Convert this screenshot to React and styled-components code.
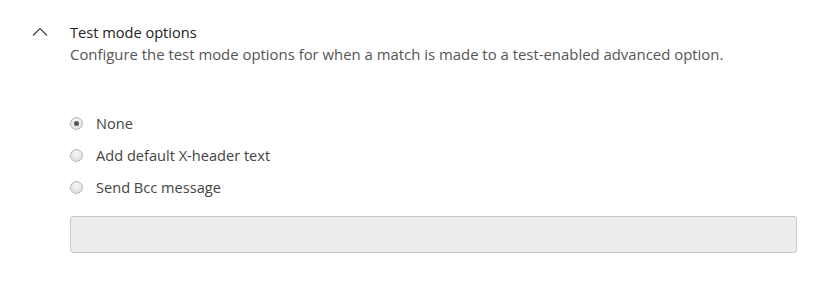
import React, { useState } from 'react';
import styled, { createGlobalStyle } from 'styled-components';

const GlobalStyle = createGlobalStyle`
  body {
    margin: 0;
    background: #fff;
    font-family: "Open Sans", "Noto Sans", sans-serif;
  }
`;

const Page = styled.div`
  padding: 21px 18px 0 31px;
`;

const Header = styled.div`
  display: flex;
  align-items: flex-start;
`;

const ToggleButton = styled.button`
  width: 39px;
  height: 22px;
  padding: 0 0 0 1px;
  margin: 0;
  border: none;
  background: none;
  display: flex;
  align-items: center;
  cursor: pointer;
`;

const HeaderText = styled.div`
  display: flex;
  flex-direction: column;
`;

const Title = styled.div`
  font-size: 14.6px;
  line-height: 22px;
  color: #222;
`;

const Description = styled.div`
  font-size: 14.9px;
  line-height: 22px;
  color: #555;
`;

const Body = styled.div`
  padding: 47px 0 0 39px;
`;

const OptionList = styled.div`
  display: flex;
  flex-direction: column;
  gap: 10px;
`;

const OptionRow = styled.label`
  display: flex;
  align-items: center;
  gap: 13px;
  height: 22px;
  font-size: 14.6px;
  color: #444;
  cursor: pointer;
`;

const Radio = styled.span`
  width: 11px;
  height: 11px;
  border-radius: 50%;
  border: 1px solid #b5b5b5;
  background: radial-gradient(circle at 50% 35%, #f4f4f4 0%, #dcdcdc 100%);
  display: flex;
  align-items: center;
  justify-content: center;
  flex-shrink: 0;

  &::after {
    content: '';
    width: 5px;
    height: 5px;
    border-radius: 50%;
    background: ${(p) => (p.$checked ? '#555' : 'transparent')};
  }
`;

const TextBox = styled.div`
  margin-top: 18px;
  height: 35px;
  border: 1px solid #cacaca;
  border-radius: 3px;
  background: #ededed;
`;

const options = ['None', 'Add default X-header text', 'Send Bcc message'];

export default function App() {
  const [selected, setSelected] = useState(0);
  return (
    <>
      <GlobalStyle />
      <Page>
        <Header>
          <ToggleButton aria-label="Collapse">
            <svg width="16" height="10" viewBox="0 0 16 10">
              <path d="M1 8.5 L8 1.5 L15 8.5" fill="none" stroke="#444" strokeWidth="1.2" />
            </svg>
          </ToggleButton>
          <HeaderText>
            <Title>Test mode options</Title>
            <Description>
              Configure the test mode options for when a match is made to a test-enabled advanced option.
            </Description>
          </HeaderText>
        </Header>
        <Body>
          <OptionList>
            {options.map((label, i) => (
              <OptionRow key={label} onClick={() => setSelected(i)}>
                <Radio $checked={selected === i} />
                {label}
              </OptionRow>
            ))}
          </OptionList>
          <TextBox />
        </Body>
      </Page>
    </>
  );
}
